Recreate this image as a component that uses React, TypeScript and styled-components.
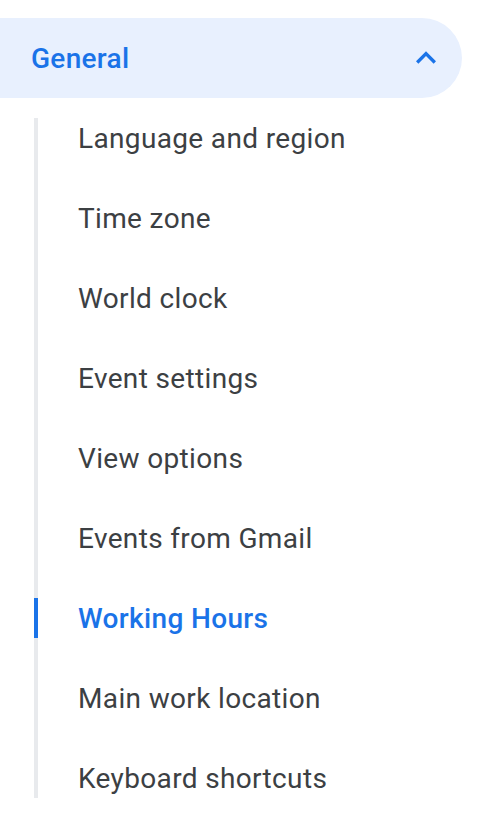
import React from "react";
import styled, { createGlobalStyle } from "styled-components";

const GlobalStyle = createGlobalStyle`
  html, body {
    margin: 0;
    padding: 0;
    background: #ffffff;
    font-family: Roboto, "Liberation Sans", Arial, sans-serif;
  }
`;

const Nav = styled.nav`
  width: 484px;
  padding-top: 18px;
  box-sizing: border-box;
`;

const SectionHeader = styled.button`
  display: flex;
  align-items: center;
  justify-content: space-between;
  width: 462px;
  height: 80px;
  padding: 0 16px 0 31px;
  box-sizing: border-box;
  border: none;
  border-radius: 0 40px 40px 0;
  background: #e8f0fe;
  color: #1a73e8;
  font-family: Roboto, "Liberation Sans", Arial, sans-serif;
  font-size: 28px;
  font-weight: 500;
  letter-spacing: 0.3px;
  cursor: pointer;
`;

const Chevron = styled.svg`
  width: 40px;
  height: 40px;
  fill: #1a73e8;
`;

const ItemList = styled.ul`
  list-style: none;
  margin: 20px 0 0 34px;
  padding: 0;
  display: flex;
  flex-direction: column;
  gap: 40px;
  border-left: 4px solid #e8eaed;
  width: 400px;
`;

const Item = styled.li<{ $active?: boolean }>`
  position: relative;
  height: 40px;
  display: flex;
  align-items: center;
  padding-left: 40px;
  font-size: 28px;
  letter-spacing: 0.35px;
  color: ${(p) => (p.$active ? "#1a73e8" : "#3c4043")};
  font-weight: ${(p) => (p.$active ? 500 : 400)};

  &::before {
    content: "";
    display: ${(p) => (p.$active ? "block" : "none")};
    position: absolute;
    left: -4px;
    top: 0;
    width: 4px;
    height: 40px;
    background: #1a73e8;
  }
`;

const items = [
  "Language and region",
  "Time zone",
  "World clock",
  "Event settings",
  "View options",
  "Events from Gmail",
  "Working Hours",
  "Main work location",
  "Keyboard shortcuts",
];

export default function App() {
  return (
    <>
      <GlobalStyle />
      <Nav>
        <SectionHeader>
          General
          <Chevron viewBox="0 0 24 24">
            <path d="M12 8l-6 6 1.41 1.41L12 10.83l4.59 4.58L18 14z" />
          </Chevron>
        </SectionHeader>
        <ItemList>
          {items.map((label) => (
            <Item key={label} $active={label === "Working Hours"}>
              {label}
            </Item>
          ))}
        </ItemList>
      </Nav>
    </>
  );
}
